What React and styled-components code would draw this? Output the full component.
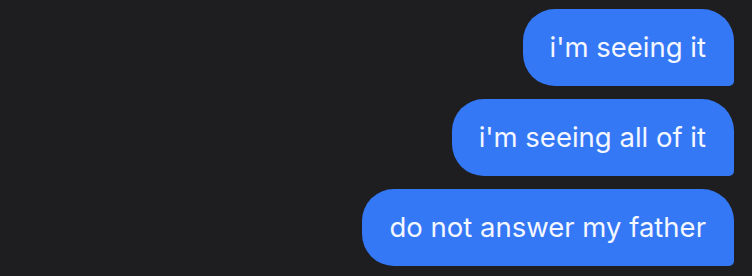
import React from 'react';
import styled, { createGlobalStyle } from 'styled-components';

const GlobalStyle = createGlobalStyle`
  html, body {
    margin: 0;
    padding: 0;
    background: #1e1e20;
  }
`;

const Thread = styled.div`
  width: 752px;
  height: 276px;
  box-sizing: border-box;
  padding: 9px 18px 0 0;
  display: flex;
  flex-direction: column;
  align-items: flex-end;
  gap: 13px;
  background: #1e1e20;
  overflow: hidden;
`;

const Bubble = styled.div`
  height: 77px;
  box-sizing: border-box;
  padding: 0 28px 2px 27px;
  display: flex;
  align-items: center;
  background: #3478f6;
  color: #f4f7ff;
  font-family: 'Inter', 'Noto Sans', sans-serif;
  font-size: 27.5px;
  font-weight: 400;
  border-radius: 32px 32px 5px 32px;
  white-space: nowrap;
`;

const messages = ["i'm seeing it", "i'm seeing all of it", 'do not answer my father'];

const App = () => (
  <>
    <GlobalStyle />
    <Thread>
      {messages.map((m) => (
        <Bubble key={m}>{m}</Bubble>
      ))}
    </Thread>
  </>
);

export default App;
